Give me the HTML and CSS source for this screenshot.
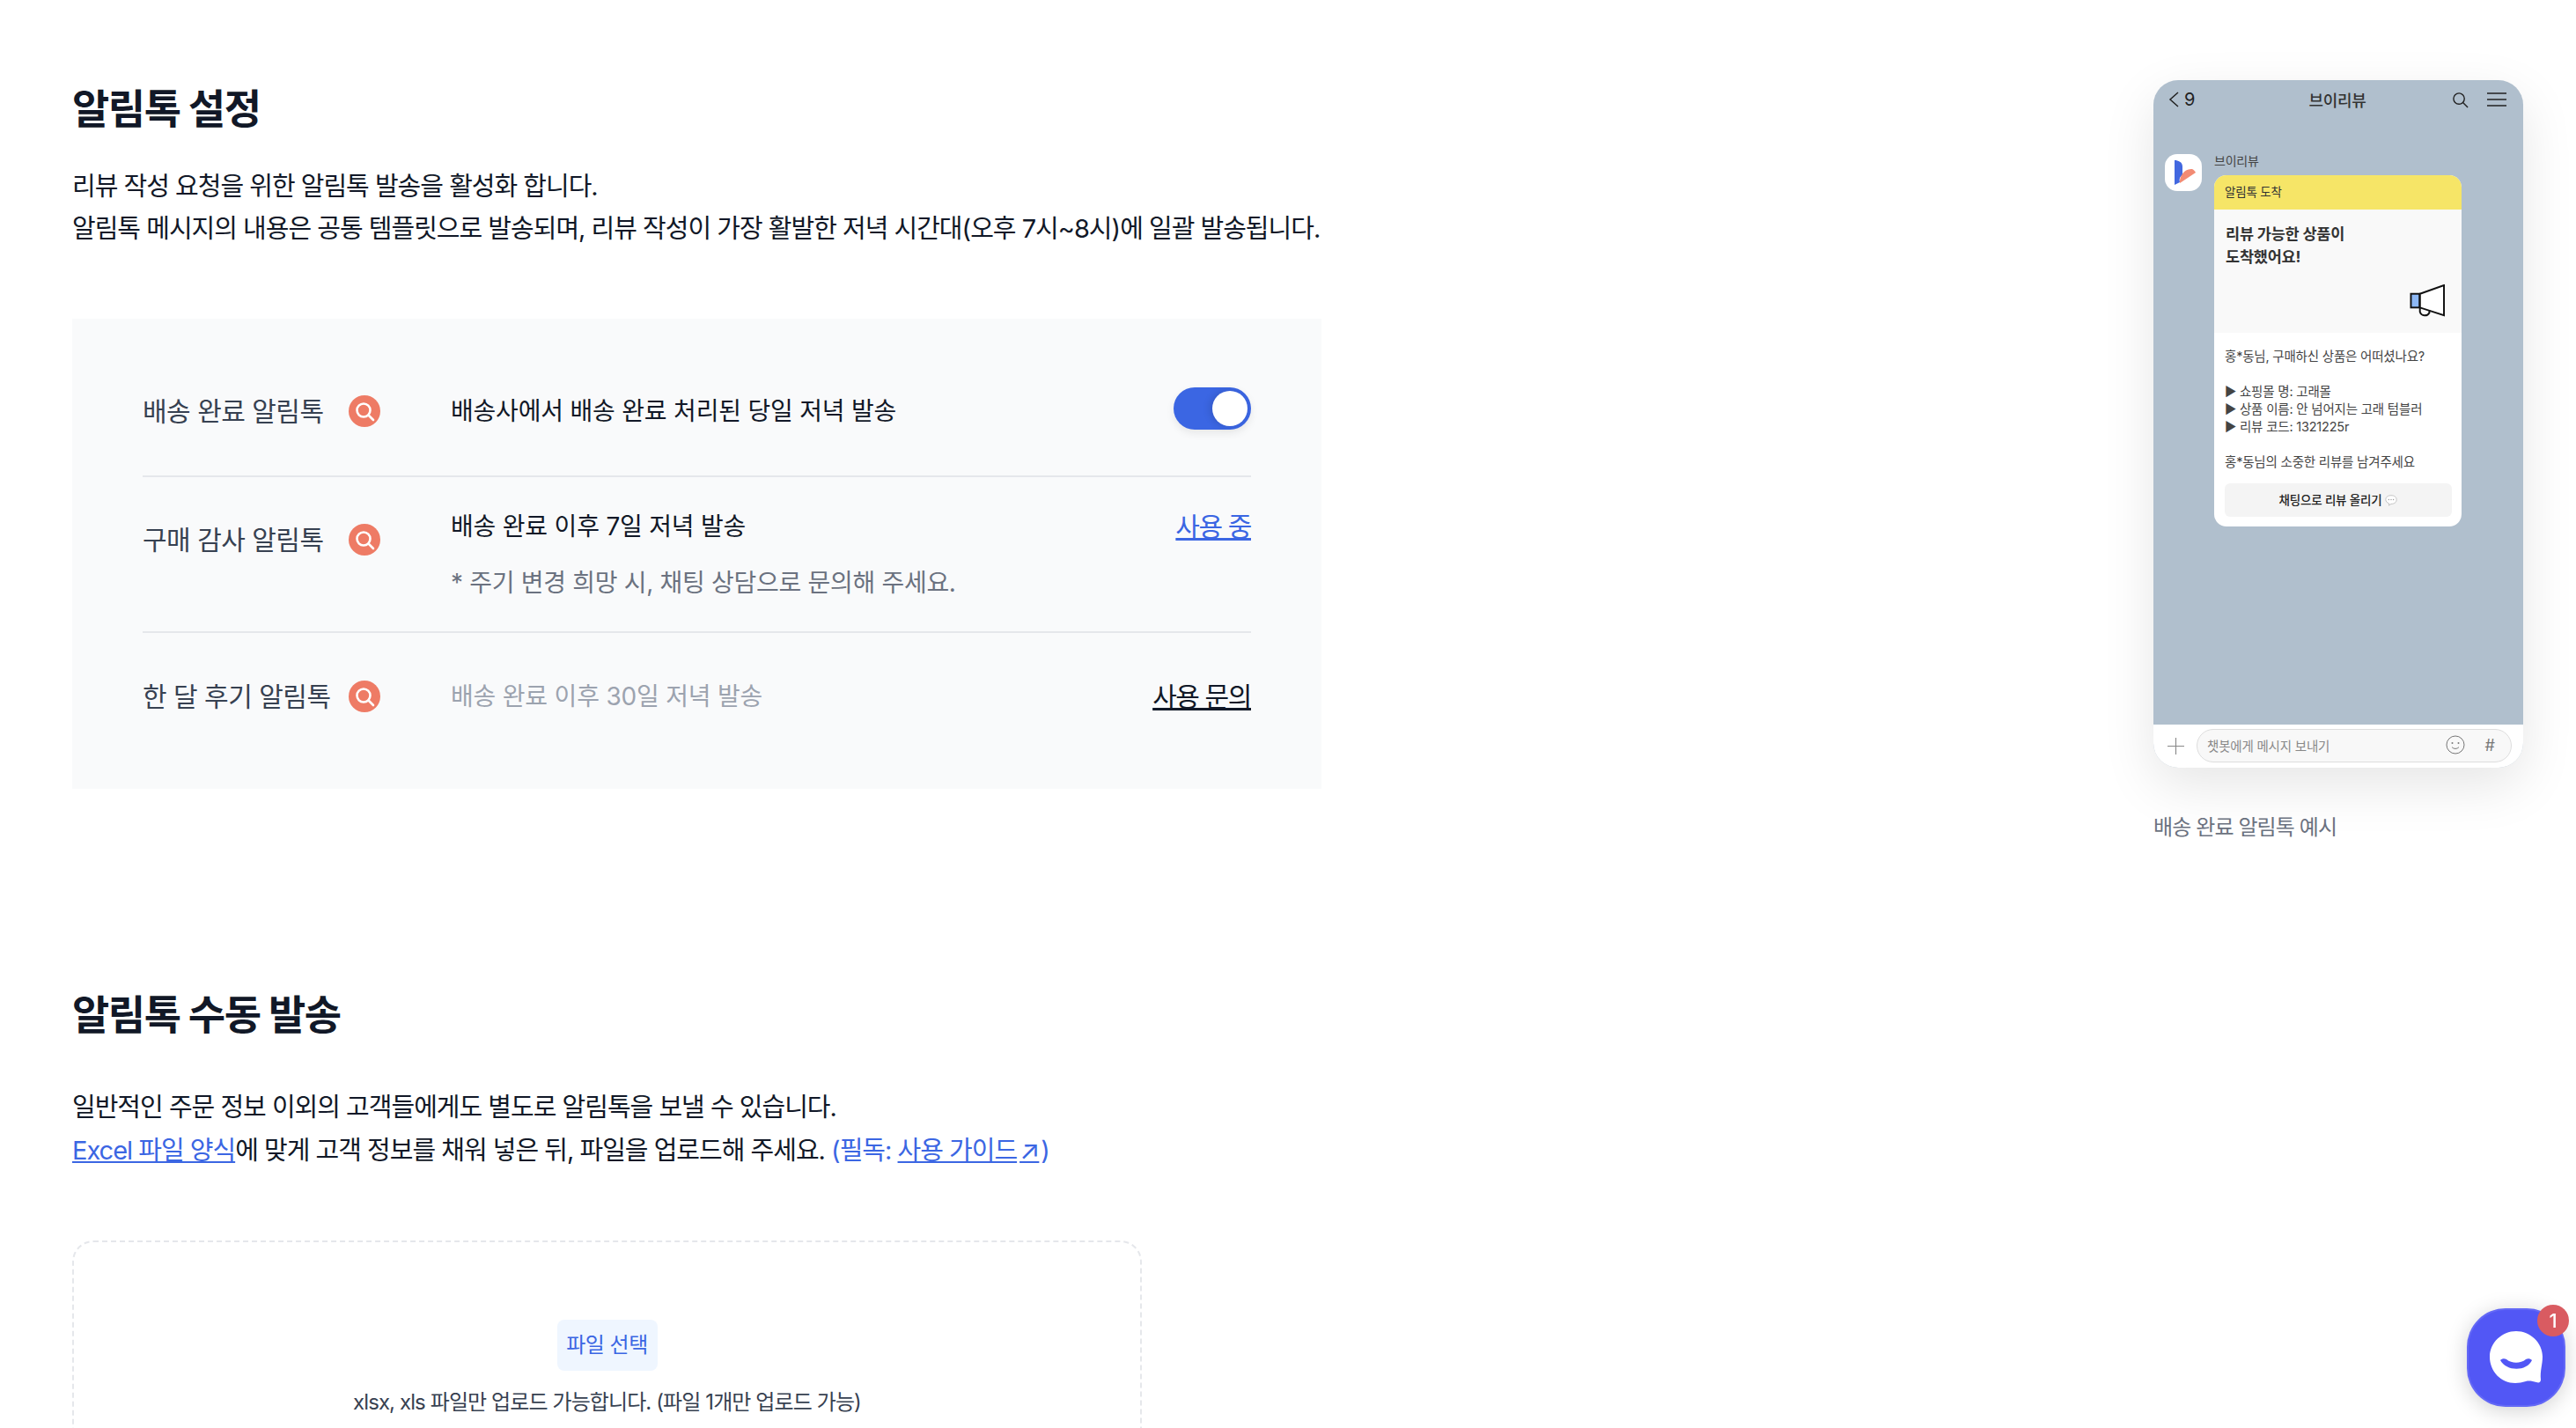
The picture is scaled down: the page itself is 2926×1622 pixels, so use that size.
FILE: index.html
```html
<!DOCTYPE html>
<html lang="ko">
<head>
<meta charset="utf-8">
<title>알림톡 설정</title>
<link rel="stylesheet" href="styles.css">
</head>
<body>
<main class="page">
  <div class="content">
    <section class="sec-auto">
      <h1 class="title">알림톡 설정</h1>
      <p class="lead">리뷰 작성 요청을 위한 알림톡 발송을 활성화 합니다.<br>알림톡 메시지의 내용은 공통 템플릿으로 발송되며, 리뷰 작성이 가장 활발한 저녁 시간대(오후 7시~8시)에 일괄 발송됩니다.</p>
      <div class="panel">
        <div class="row row-first">
          <div class="label"><span class="label-text">배송 완료 알림톡</span>
            <svg class="mag" viewBox="0 0 36 36"><circle cx="18" cy="18" r="18" fill="#ee7b65"/><circle cx="17" cy="17" r="7.5" fill="none" stroke="#fff" stroke-width="2.6"/><path d="M22.5 22.5 L28 28" stroke="#fff" stroke-width="2.6" stroke-linecap="round"/></svg>
          </div>
          <div class="desc">배송사에서 배송 완료 처리된 당일 저녁 발송</div>
          <div class="toggle"><span class="knob"></span></div>
        </div>
        <div class="row row-second">
          <div class="label label-shift"><span class="label-text">구매 감사 알림톡</span>
            <svg class="mag" viewBox="0 0 36 36"><circle cx="18" cy="18" r="18" fill="#ee7b65"/><circle cx="17" cy="17" r="7.5" fill="none" stroke="#fff" stroke-width="2.6"/><path d="M22.5 22.5 L28 28" stroke="#fff" stroke-width="2.6" stroke-linecap="round"/></svg>
          </div>
          <div class="desc">배송 완료 이후 7일 저녁 발송
            <div class="note">* 주기 변경 희망 시, 채팅 상담으로 문의해 주세요.</div>
          </div>
          <a class="link-blue action">사용 중</a>
        </div>
        <div class="row row-third">
          <div class="label"><span class="label-text">한 달 후기 알림톡</span>
            <svg class="mag" viewBox="0 0 36 36"><circle cx="18" cy="18" r="18" fill="#ee7b65"/><circle cx="17" cy="17" r="7.5" fill="none" stroke="#fff" stroke-width="2.6"/><path d="M22.5 22.5 L28 28" stroke="#fff" stroke-width="2.6" stroke-linecap="round"/></svg>
          </div>
          <div class="desc desc-off">배송 완료 이후 30일 저녁 발송</div>
          <a class="link-dark action">사용 문의</a>
        </div>
      </div>
    </section>
    <section class="sec-manual">
      <h1 class="title">알림톡 수동 발송</h1>
      <p class="lead lead-manual">일반적인 주문 정보 이외의 고객들에게도 별도로 알림톡을 보낼 수 있습니다.<br><a class="link-blue">Excel 파일 양식</a>에 맞게 고객 정보를 채워 넣은 뒤, 파일을 업로드해 주세요. <span class="must">(필독: <a class="link-blue">사용 가이드<span class="ext">↗</span></a>)</span></p>
      <div class="drop">
        <span class="pick">파일 선택</span>
        <div class="drop-hint">xlsx, xls 파일만 업로드 가능합니다. (파일 1개만 업로드 가능)</div>
      </div>
    </section>
  </div>
  <aside class="preview">
    <div class="phone">
      <div class="ph-head">
        <div class="ph-back">
          <svg class="ph-chev" viewBox="0 0 12 18"><path d="M11 1 L2 9 L11 17" fill="none" stroke="#222" stroke-width="1.5"/></svg>
          <span>9</span>
        </div>
        <div class="ph-title">브이리뷰</div>
        <div class="ph-tools">
          <svg class="ph-search" viewBox="0 0 20 20"><circle cx="8.5" cy="8.5" r="6.5" fill="none" stroke="#222" stroke-width="1.5"/><path d="M13.2 13.2 L19 19" stroke="#222" stroke-width="1.5"/></svg>
          <svg class="ph-menu" viewBox="0 0 22 16"><path d="M0 1 H22 M0 8 H22 M0 15 H22" stroke="#222" stroke-width="1.4"/></svg>
        </div>
      </div>
      <div class="ph-chat">
        <div class="ph-avatar">
          <svg viewBox="0 0 42 42" class="ph-logo"><path d="M11 7 C15 7 20 9 20 14 V24 C17 26 16 28 17 32 L11 35 Z" fill="#4268e0"/><path d="M17 33 C16 26 22 16 31 17 C33 18 34 19 35 21 Z" fill="#f28b74"/></svg>
        </div>
        <div class="ph-msg">
          <div class="ph-name">브이리뷰</div>
          <div class="card">
            <div class="card-top">알림톡 도착</div>
            <div class="card-hero">
              <div class="card-title">리뷰 가능한 상품이<br>도착했어요!</div>
              <svg class="horn" viewBox="0 0 42 40"><path d="M12 11 L40 1 V36 L12 27 Z" fill="#fff" stroke="#111" stroke-width="2"/><rect x="1.500" y="11" width="10" height="16" fill="#8db8f5" stroke="#111" stroke-width="2"/><path d="M12 27 V32 A6 6 0 0 0 23 33 L23 30" fill="none" stroke="#111" stroke-width="2"/></svg>
            </div>
            <div class="card-body">
              <p>홍*동님, 구매하신 상품은 어떠셨나요?</p>
              <p class="card-gap">▶ 쇼핑몰 명: 고래몰<br>▶ 상품 이름: 안 넘어지는 고래 텀블러<br>▶ 리뷰 코드: 1321225r</p>
              <p class="card-gap">홍*동님의 소중한 리뷰를 남겨주세요</p>
              <div class="card-btn">채팅으로 리뷰 올리기
                <svg class="bubble" viewBox="0 0 16 16"><path d="M8 2 C12 2 15 4 15 7.500 C15 11 12 13 8 13 L5 15 L5.500 12.500 C3 11.500 1 10 1 7.500 C1 4 4 2 8 2 Z" fill="#fff" stroke="#bbb"/><circle cx="5" cy="7.500" r=".8" fill="#999"/><circle cx="8" cy="7.500" r=".8" fill="#999"/><circle cx="11" cy="7.500" r=".8" fill="#999"/></svg>
              </div>
            </div>
          </div>
        </div>
      </div>
      <div class="ph-input">
        <svg class="ph-plus" viewBox="0 0 20 20"><path d="M10 0 V20 M0 10 H20" stroke="#888" stroke-width="1.2"/></svg>
        <div class="ph-field">
          <span class="ph-place">챗봇에게 메시지 보내기</span>
          <svg class="ph-smile" viewBox="0 0 22 22"><circle cx="11" cy="11" r="10" fill="none" stroke="#777" stroke-width="1"/><circle cx="7.500" cy="9" r="1" fill="#777"/><circle cx="14.500" cy="9" r="1" fill="#777"/><path d="M7 13.500 C9 16 13 16 15 13.500" fill="none" stroke="#777"/></svg>
          <span class="ph-hash">#</span>
        </div>
      </div>
    </div>
    <div class="caption">배송 완료 알림톡 예시</div>
  </aside>
</main>
<div class="chat-btn">
  <svg class="chat-ico" viewBox="0 0 60 60"><path d="M30 0 C46 0 60 13 60 29 C60 38 57 45 58 55 C58 58 56 59 53 58 C49 57 45 56 41 57 C37 58 33 59 29 59 C13 59 0 46 0 29 C0 13 14 0 30 0 Z" fill="#fff"/><path d="M12 33 C14 31 17 31 19 32 C25 37 35 37 41 32 C43 31 46 31 48 33 C42 46 19 46 12 33 Z" fill="#5257f5"/></svg>
  <span class="chat-badge">1</span>
</div>
</body>
</html>
```
FILE: styles.css
```css
* { box-sizing: border-box; }
html, body { margin: 0; height: 1622px; overflow: hidden; background: #fff; }
body { font-family: "Inter", "Noto Sans CJK KR", sans-serif; color: #111827; }
p { margin: 0; }
.page { display: flex; justify-content: space-between; padding: 0 60px 0 82px; }
.content { width: 1419px; padding-top: 87px; }
.title { margin: 0; font-size: 46px; line-height: 72px; font-weight: 700; letter-spacing: -1.5px; color: #111827; }
.lead { margin-top: 29px; font-size: 29px; line-height: 48px; letter-spacing: -1px; color: #111827; white-space: nowrap; }
.lead-manual { margin-top: 46px; }
.panel { margin-top: 78px; height: 534px; padding: 28px 80px 0; background: #f9fafb; }
.row { display: flex; border-bottom: 2px solid #e5e7eb; }
.row-first { height: 152px; align-items: center; padding-top: 4px; }
.row-second { height: 177px; align-items: flex-start; padding-top: 32px; }
.row-third { height: 144px; align-items: center; border-bottom: 0; }
.label { width: 350px; display: flex; align-items: center; font-size: 30px; line-height: 48px; color: #374151; letter-spacing: -.5px; flex: none; }
.label-shift { margin-top: 15px; }
.label-text { white-space: nowrap; width: 234px; }
.mag { width: 36px; height: 36px; flex: none; }
.desc { flex: 1; font-size: 28px; line-height: 48px; letter-spacing: -.2px; color: #111827; }
.note { margin-top: 16px; color: #6b7280; letter-spacing: -.3px; }
.desc-off { color: #9ca3af; }
.toggle { width: 88px; height: 48px; margin-top: -6px; border-radius: 24px; background: #3b66e3; padding: 4px; display: flex; justify-content: flex-end; box-shadow: 0 4px 10px rgba(0,0,0,.08); }
.knob { width: 40px; height: 40px; border-radius: 50%; background: #fff; box-shadow: -3px 0 8px rgba(0,0,0,.12); }
.action { font-size: 30px; line-height: 48px; letter-spacing: -1.4px; white-space: nowrap; }
.link-blue { color: #3b66e3; text-decoration: underline; }
.link-dark { color: #111827; text-decoration: underline; }
.must { color: #3b66e3; }
.ext { margin-left: 3px; margin-right: 2px; font-size: 30px; }
.sec-manual { margin-top: 220px; }
.drop { margin-top: 78px; width: 1215px; height: 400px; border: 2px dashed #e5e7eb; border-radius: 24px; padding-top: 88px; display: flex; flex-direction: column; align-items: center; }
.pick { width: 114px; height: 58px; border-radius: 8px; background: #eff6ff; color: #3b66e3; font-size: 24px; line-height: 58px; text-align: center; letter-spacing: -.5px; }
.drop-hint { margin-top: 16px; font-size: 24px; line-height: 40px; color: #374151; letter-spacing: -.9px; }
.preview { width: 420px; padding-top: 91px; flex: none; }
.phone { width: 420px; height: 781px; border-radius: 28px; display: flex; flex-direction: column; background: #b0bfcd; box-shadow: 0 20px 60px rgba(0,0,0,.1); overflow: hidden; }
.ph-head { height: 44px; flex: none; display: grid; grid-template-columns: 1fr auto 1fr; align-items: center; padding: 0 19px 0 17px; color: #222; font-size: 20px; }
.ph-back { display: flex; align-items: center; gap: 6px; }
.ph-chev { width: 12px; height: 18px; }
.ph-title { font-size: 18px; font-weight: 500; color: #333; letter-spacing: -.3px; }
.ph-tools { display: flex; align-items: center; justify-content: flex-end; gap: 21px; }
.ph-search { width: 19px; height: 19px; }
.ph-menu { width: 22px; height: 16px; }
.ph-chat { flex: 1; display: flex; padding: 40px 0 0 13px; gap: 14px; align-items: flex-start; }
.ph-avatar { width: 42px; height: 42px; border-radius: 14px; background: #fff; flex: none; }
.ph-logo { display: block; width: 42px; height: 42px; }
.ph-msg { width: 281px; margin-top: -1px; }
.ph-name { font-size: 14px; line-height: 18px; color: #444; letter-spacing: -.2px; }
.card { margin-top: 7px; border-radius: 14px; background: #fff; overflow: hidden; }
.card-top { height: 39px; background: #f6e567; font-size: 13.500px; line-height: 39px; padding-left: 12px; color: #333; letter-spacing: -.2px; }
.card-hero { height: 140px; background: #f9f9f9; padding: 15px 13px 0; display: flex; flex-direction: column; }
.card-title { font-size: 17.500px; line-height: 26px; font-weight: 700; color: #333; letter-spacing: -.2px; }
.horn { width: 41px; height: 39px; align-self: flex-end; margin-top: 18px; margin-right: 5px; }
.card-body { padding: 17px 11px 11px 12px; font-size: 14.500px; line-height: 20px; color: #444; letter-spacing: -.2px; white-space: nowrap; }
.card-gap { margin-top: 20px; }
.card-btn { margin-top: 14px; height: 38px; border-radius: 6px; background: #f4f4f4; display: flex; align-items: center; justify-content: center; gap: 4px; color: #222; font-weight: 500; font-size: 13.500px; }
.bubble { width: 14px; height: 14px; }
.ph-input { height: 49px; flex: none; background: #fff; display: flex; align-items: flex-start; padding: 5px 13px 0 16px; gap: 14px; }
.ph-plus { width: 19px; height: 19px; margin-top: 10px; flex: none; }
.ph-field { flex: 1; height: 38px; border: 1px solid #ddd; border-radius: 19px; background: #f8f8f8; display: flex; align-items: center; padding: 0 18px 2px 11px; font-size: 14.500px; color: #888; }
.ph-place { flex: 1; letter-spacing: -.2px; }
.ph-smile { width: 22px; height: 22px; }
.ph-hash { margin-left: 23px; font-size: 18px; color: #777; }
.caption { margin-top: 52px; font-size: 24px; line-height: 32px; color: #6b7280; letter-spacing: -.9px; }
.chat-btn { position: fixed; left: 2802px; top: 1486px; width: 112px; height: 112px; border-radius: 44px; background: #5257f5; box-shadow: 0 4px 24px rgba(0,0,0,.18), inset 0 0 0 2px rgba(255,255,255,.1); display: flex; align-items: center; justify-content: center; }
.chat-ico { width: 60px; height: 60px; }
.chat-badge { position: absolute; right: -4px; top: -4px; width: 36px; height: 36px; border-radius: 50%; background: #d95b61; color: #fff; font-size: 22px; font-weight: 500; line-height: 36px; text-align: center; }
```
